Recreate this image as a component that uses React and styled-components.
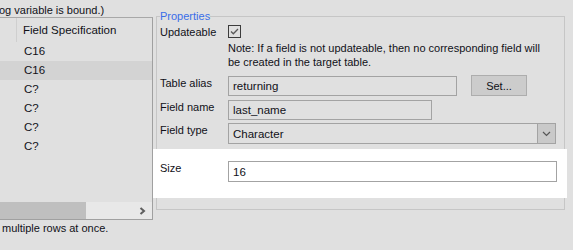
import React from 'react';
import styled, { createGlobalStyle } from 'styled-components';

const GlobalStyle = createGlobalStyle`
  html, body {
    margin: 0;
    width: 573px;
    height: 250px;
    overflow: hidden;
    background: #e0e0e0;
    font-family: 'Liberation Sans', Arial, sans-serif;
    font-size: 11px;
    color: #111118;
  }
`;

const Page = styled.div`
  display: flex;
  height: 250px;
`;

// left side: the grid of fields
const LeftCol = styled.div`
  width: 153px;
  display: flex;
  flex-direction: column;
  flex-shrink: 0;
`;

const Caption = styled.div`
  height: 14px;
  line-height: 14px;
  padding: ${p => (p.$top ? '3px 0 0' : '1px 0 0')};
  margin-left: ${p => (p.$top ? '-1px' : '2px')};
  white-space: nowrap;
`;

const ListPanel = styled.div`
  height: 201px;
  border-top: 1px solid #a8a8a8;
  border-right: 1px solid #a0a0a0;
  border-bottom: 1px solid #a0a0a0;
  display: flex;
  flex-direction: column;
  font-size: 11.5px;
`;

const HeaderRow = styled.div`
  height: 24px;
  display: flex;
  align-items: center;
`;

const HeaderGap = styled.div`
  width: 17px;
  height: 24px;
  border-right: 1px solid #cfcfcf;
  box-sizing: border-box;
`;

const HeaderCell = styled.div`
  padding-left: 6px;
  padding-bottom: 1px;
`;

const Row = styled.div`
  height: 19px;
  line-height: 19px;
  padding-left: 24px;
  background: ${p => (p.$selected ? '#d3d3d3' : 'transparent')};
`;

const Spacer = styled.div`
  flex: 1;
`;

const HScroll = styled.div`
  height: 17px;
  display: flex;
  align-items: center;
  background: #e8e8e8;
`;

const Thumb = styled.div`
  width: 86px;
  height: 17px;
  background: #bfbfbf;
`;

const ScrollArrow = styled.svg`
  margin-left: auto;
  margin-right: 6px;
`;

// right side: properties group
const RightCol = styled.div`
  margin-left: 3px;
  padding-top: 9px;
`;

const GroupBox = styled.fieldset`
  width: 401px;
  height: 201px;
  margin: 0;
  padding: 2px 3px 0;
  border: 1px solid #c6c6c6;
  box-sizing: border-box;
`;

const Legend = styled.legend`
  padding: 0;
  line-height: 14px;
  color: #3a6ee8;
`;

const FieldRow = styled.div`
  display: flex;
  align-items: flex-start;
  margin-top: ${p => p.$mt || 0}px;
`;

const Label = styled.div`
  width: 68px;
  flex-shrink: 0;
  line-height: 14px;
`;

const CheckBox = styled.div`
  width: 13px;
  height: 13px;
  box-sizing: border-box;
  border: 1px solid #3c3c3c;
  display: flex;
  align-items: center;
  justify-content: center;
`;

const Note = styled.div`
  margin-left: 68px;
  margin-top: 2px;
  line-height: 14px;
`;

const TextBox = styled.div`
  width: ${p => p.$w}px;
  height: ${p => p.$h || 20}px;
  box-sizing: border-box;
  border: 1px solid #a3a3a3;
  background: ${p => (p.$white ? '#ffffff' : 'transparent')};
  padding-left: 4px;
  display: flex;
  align-items: center;
  font-size: 11.5px;
`;

const Button = styled.div`
  width: 56px;
  height: 21px;
  margin-left: 14px;
  margin-top: -1px;
  box-sizing: border-box;
  border: 1px solid #adadad;
  background: #cccccc;
  display: flex;
  align-items: center;
  justify-content: center;
`;

const Select = styled.div`
  width: 328px;
  height: 21px;
  box-sizing: border-box;
  border: 1px solid #a3a3a3;
  display: flex;
  align-items: center;
  font-size: 11.5px;
`;

const SelectValue = styled.div`
  flex: 1;
  padding-left: 4px;
`;

const SelectButton = styled.div`
  width: 18px;
  height: 19px;
  box-sizing: border-box;
  border-left: 1px solid #a3a3a3;
  background: #c9c9c9;
  display: flex;
  align-items: center;
  justify-content: center;
`;

const Highlight = styled.div`
  margin: 5px -6px 0 -7px;
  padding: 12px 10px 16px 7px;
  background: #ffffff;
  display: flex;
  align-items: flex-start;
`;

const rows = [
  { spec: 'C16' },
  { spec: 'C16', selected: true },
  { spec: 'C?' },
  { spec: 'C?' },
  { spec: 'C?' },
  { spec: 'C?' },
];

export default function App() {
  return (
    <>
      <GlobalStyle />
      <Page>
        <LeftCol>
          <Caption $top>og variable is bound.)</Caption>
          <ListPanel>
            <HeaderRow>
              <HeaderGap />
              <HeaderCell>Field Specification</HeaderCell>
            </HeaderRow>
            {rows.map((r, i) => (
              <Row key={i} $selected={r.selected}>{r.spec}</Row>
            ))}
            <Spacer />
            <HScroll>
              <Thumb />
              <ScrollArrow width="7" height="8" viewBox="0 0 7 8">
                <path d="M1.5 1 L5 4 L1.5 7" fill="none" stroke="#5e5e5e" strokeWidth="2" />
              </ScrollArrow>
            </HScroll>
          </ListPanel>
          <Caption>multiple rows at once.</Caption>
        </LeftCol>

        <RightCol>
          <GroupBox>
            <Legend>Properties</Legend>
            <FieldRow>
              <Label>Updateable</Label>
              <CheckBox>
                <svg width="11" height="11" viewBox="0 0 11 11">
                  <path d="M2 5.5 L4.3 7.8 L9 3" fill="none" stroke="#5a5a5a" strokeWidth="1.3" />
                </svg>
              </CheckBox>
            </FieldRow>
            <Note>
              Note: If a field is not updateable, then no corresponding field will
              <br />
              be created in the target table.
            </Note>
            <FieldRow $mt={7}>
              <Label>Table alias</Label>
              <TextBox $w={229}>returning</TextBox>
              <Button>Set...</Button>
            </FieldRow>
            <FieldRow $mt={4}>
              <Label>Field name</Label>
              <TextBox $w={204}>last_name</TextBox>
            </FieldRow>
            <FieldRow $mt={3}>
              <Label>Field type</Label>
              <Select>
                <SelectValue>Character</SelectValue>
                <SelectButton>
                  <svg width="9" height="6" viewBox="0 0 9 6">
                    <path d="M1 1 L4.5 4.5 L8 1" fill="none" stroke="#555" strokeWidth="1.2" />
                  </svg>
                </SelectButton>
              </Select>
            </FieldRow>
            <Highlight>
              <Label>Size</Label>
              <TextBox $w={329} $h={21} $white>16</TextBox>
            </Highlight>
          </GroupBox>
        </RightCol>
      </Page>
    </>
  );
}
